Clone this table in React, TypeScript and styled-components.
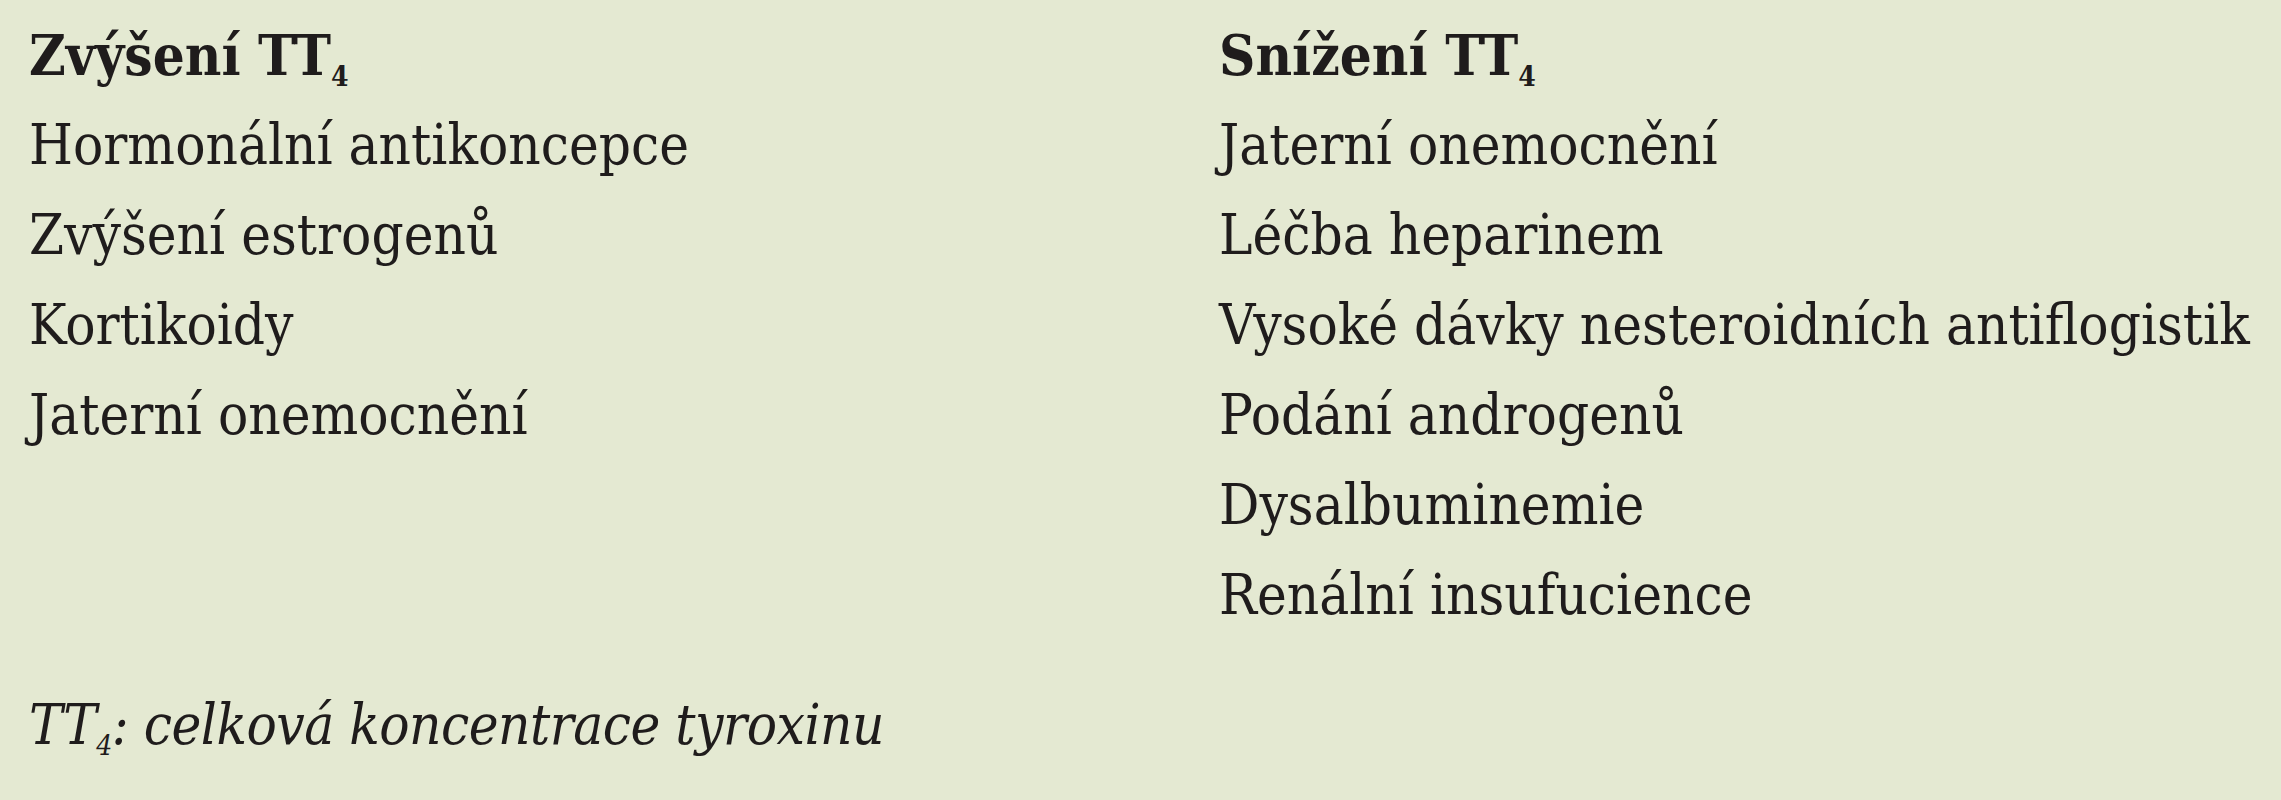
import styled, { createGlobalStyle } from "styled-components";

const GlobalStyle = createGlobalStyle`
  html, body {
    margin: 0;
    padding: 0;
    background: #e4e9d2;
  }
`;

const Page = styled.div`
  width: 2281px;
  height: 800px;
  box-sizing: border-box;
  padding: 10px 0 0 29px;
  background: #e4e9d2;
  color: #1f1c1c;
  font-family: "DejaVu Serif", "Liberation Serif", serif;
  font-stretch: condensed;
  font-size: 56px;
  line-height: 90px;
`;

const Columns = styled.div`
  display: grid;
  grid-template-columns: 1190px 1fr;
`;

const List = styled.ul`
  list-style: none;
  margin: 0;
  padding: 0;
`;

const Heading = styled.li`
  font-weight: bold;
`;

const Item = styled.li`
  white-space: nowrap;
`;

const Sub = styled.sub`
  font-size: 0.5em;
  vertical-align: -0.4em;
  line-height: 0;
`;

const Note = styled.p`
  margin: 40px 0 0;
  font-style: italic;
  letter-spacing: -0.5px;
`;

const increase = [
  "Hormonální antikoncepce",
  "Zvýšení estrogenů",
  "Kortikoidy",
  "Jaterní onemocnění",
];

const decrease = [
  "Jaterní onemocnění",
  "Léčba heparinem",
  "Vysoké dávky nesteroidních antiflogistik",
  "Podání androgenů",
  "Dysalbuminemie",
  "Renální insufucience",
];

function App() {
  return (
    <>
      <GlobalStyle />
      <Page>
        <Columns>
          <List>
            <Heading>
              Zvýšení TT<Sub>4</Sub>
            </Heading>
            {increase.map((text) => (
              <Item key={text}>{text}</Item>
            ))}
          </List>
          <List>
            <Heading>
              Snížení TT<Sub>4</Sub>
            </Heading>
            {decrease.map((text) => (
              <Item key={text}>{text}</Item>
            ))}
          </List>
        </Columns>
        <Note>
          TT<Sub>4</Sub>: celková koncentrace tyroxinu
        </Note>
      </Page>
    </>
  );
}

export default App;
